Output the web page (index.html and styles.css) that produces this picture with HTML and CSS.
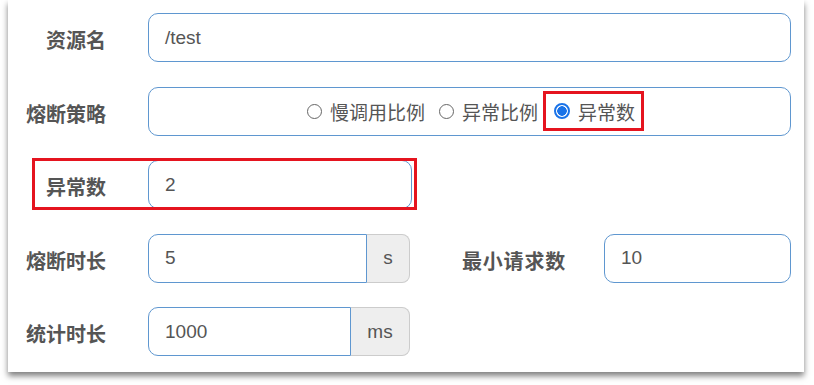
FILE: index.html
```html
<!DOCTYPE html>
<html lang="zh-CN">
<head>
    <meta charset="UTF-8">
    <title>熔断规则</title>
    <link rel="stylesheet" href="styles.css">
</head>
<body>
    <div class="card">
        <!-- 资源名 -->
        <div class="row">
            <label class="label">资源名</label>
            <div class="field wide">/test</div>
        </div>

        <!-- 熔断策略 -->
        <div class="row">
            <label class="label">熔断策略</label>
            <div class="field wide radios">
                <span class="opt"><span class="dot"></span>慢调用比例</span>
                <span class="opt"><span class="dot"></span>异常比例</span>
                <span class="opt marked"><span class="dot on"></span>异常数</span>
            </div>
        </div>

        <!-- 异常数 -->
        <div class="row">
            <label class="label">异常数</label>
            <div class="field count">2</div>
            <div class="mark-box"></div>
        </div>

        <!-- 熔断时长 / 最小请求数 -->
        <div class="row">
            <label class="label">熔断时长</label>
            <div class="group">
                <div class="field joined dur">5</div>
                <div class="addon s">s</div>
            </div>
            <label class="label sub">最小请求数</label>
            <div class="field min">10</div>
        </div>

        <!-- 统计时长 -->
        <div class="row">
            <label class="label">统计时长</label>
            <div class="group">
                <div class="field joined stat">1000</div>
                <div class="addon ms">ms</div>
            </div>
        </div>
    </div>
</body>
</html>
```

FILE: styles.css
```css
/* Reset */
* {
    margin: 0;
    padding: 0;
    box-sizing: border-box;
}

body {
    background-color: #ffffff;
    font-family: "Liberation Sans", "Noto Sans CJK SC", sans-serif;
    color: #555555;
    height: 385px;
}

/* Card */
.card {
    margin: 0 10px 0 8px;
    width: 796px;
    height: 372px;
    background-color: #ffffff;
    padding-top: 13px;
    box-shadow: 0 4px 6px rgba(0, 0, 0, 0.5);
}

/* Rows */
.row {
    position: relative;
    display: flex;
    align-items: center;
    height: 49px;
    margin-bottom: 24.5px;
}

.label {
    width: 98px;
    margin-right: 42px;
    padding-top: 4px;
    text-align: right;
    white-space: nowrap;
    font-family: "Noto Sans CJK SC", sans-serif;
    font-weight: bold;
    font-size: 20px;
    color: #555555;
}

.label.sub {
    width: 104px;
    margin-left: 52px;
    margin-right: 38px;
    text-align: left;
    letter-spacing: 0.8px;
}

/* Inputs */
.field {
    height: 49px;
    display: flex;
    align-items: center;
    padding: 0 16px;
    border: 1.5px solid #5f97d0;
    border-radius: 10px;
    font-size: 19px;
    color: #555555;
    background-color: #ffffff;
}

.field.wide {
    width: 643px;
}

.field.count {
    width: 264px;
}

.field.min {
    width: 187px;
}

.field.joined {
    border-radius: 10px 0 0 10px;
}

.field.dur {
    width: 219px;
}

.field.stat {
    width: 203px;
}

/* Input group addon */
.group {
    display: flex;
}

.addon {
    height: 49px;
    display: flex;
    align-items: center;
    justify-content: center;
    background-color: #eeeeee;
    border: 1px solid #cccccc;
    border-left: none;
    border-radius: 0 8px 8px 0;
    font-size: 19px;
    color: #555555;
}

.addon.s {
    width: 43px;
}

.addon.ms {
    width: 59px;
}

/* Radios */
.radios {
    justify-content: center;
    font-family: "Noto Sans CJK SC", sans-serif;
    font-size: 19px;
    padding: 0 0 0 12px;
}

.opt {
    display: flex;
    align-items: center;
    margin-right: 14px;
}

.opt:last-child {
    margin-right: 0;
}

.dot {
    width: 15px;
    height: 15px;
    border: 1.3px solid #666666;
    border-radius: 50%;
    margin-right: 8px;
}

.dot.on {
    width: 16px;
    height: 16px;
    border: 2px solid #1a73e8;
    background: radial-gradient(circle, #1a73e8 0 4.5px, #ffffff 5px);
}

.marked {
    height: 40px;
    padding: 0 6px 0 8px;
    border: 3px solid #e5141f;
    margin-left: -9px;
}

/* Red annotation box */
.mark-box {
    position: absolute;
    left: 24px;
    top: -2px;
    width: 385px;
    height: 52px;
    border: 3px solid #e5141f;
    pointer-events: none;
}
```
